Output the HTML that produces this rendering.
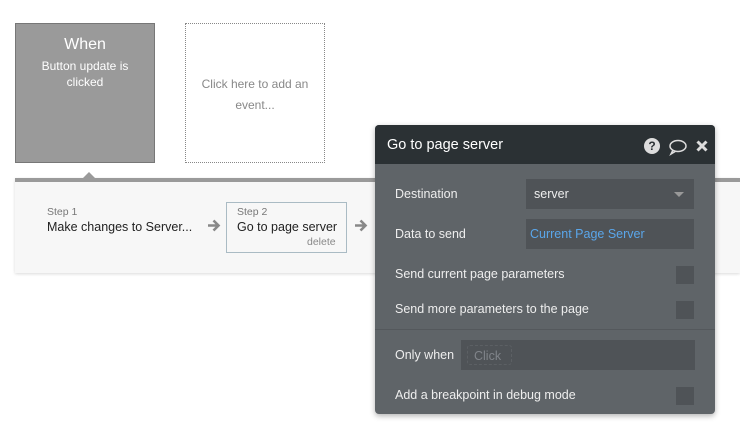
<!DOCTYPE html>
<html><head><style>
*{margin:0;padding:0;box-sizing:border-box}
body{width:740px;height:436px;background:#fff;position:relative;overflow:hidden;font-family:"Liberation Sans","DejaVu Sans",sans-serif}
.a{position:absolute}
</style></head><body>
<div class="a" style="left:15px;top:23px;width:140px;height:140px;background:#9a9a9a;border:1px solid #777;color:#fff;text-align:center">
<div style="font-size:16px;margin-top:12px">When</div>
<div style="font-size:12px;line-height:16px;margin-top:4px">Button update is<br>clicked</div>
</div>
<div class="a" style="left:185px;top:23px;width:140px;height:140px;border:1px dotted #888;color:#888;text-align:center;font-size:12px;line-height:21px;padding-top:50px">Click here to add an<br>event...</div>
<div class="a" style="left:15px;top:178px;width:725px;height:95px;background:#f7f7f7;border-top:4px solid #9a9a9a;box-shadow:0 1px 3px rgba(0,0,0,.15)"></div>
<div class="a" style="left:82px;top:172px;width:0;height:0;border-left:7px solid transparent;border-right:7px solid transparent;border-bottom:7px solid #9a9a9a"></div>
<div class="a" style="left:47px;top:206px;font-size:10.5px;color:#777">Step 1</div>
<div class="a" style="left:47px;top:220px;font-size:12.5px;color:#222">Make changes to Server...</div>
<svg class="a" style="left:207px;top:219px" width="14" height="13" viewBox="0 0 14 13"><path d="M1 6.5H11M6.5 1.5L11.5 6.5L6.5 11.5" fill="none" stroke="#888" stroke-width="2.6"/></svg>
<div class="a" style="left:226px;top:202px;width:121px;height:51px;border:1px solid #aabbc4;background:#f7f7f7"></div>
<div class="a" style="left:237px;top:206px;font-size:10.5px;color:#777">Step 2</div>
<div class="a" style="left:237px;top:220px;font-size:12.5px;color:#222">Go to page server</div>
<div class="a" style="left:307px;top:236px;font-size:10.5px;color:#888">delete</div>
<svg class="a" style="left:354px;top:219px" width="14" height="13" viewBox="0 0 14 13"><path d="M1 6.5H11M6.5 1.5L11.5 6.5L6.5 11.5" fill="none" stroke="#888" stroke-width="2.6"/></svg>

<div class="a" style="left:375px;top:125px;width:340px;height:289px;background:#5f6468;border-radius:4px;box-shadow:0 2px 6px rgba(0,0,0,.3);overflow:hidden;color:#eee;font-size:12.5px">
<div style="height:39px;background:#2b3134;color:#fff;font-size:14.5px;padding:12px 0 0 12px">Go to page server</div>
<div class="a" style="left:269px;top:13px;width:16px;height:16px;border-radius:50%;background:#ddd;color:#2b3134;font-size:12px;font-weight:bold;text-align:center;line-height:16px">?</div>
<svg class="a" style="left:293px;top:13px" width="20" height="18" viewBox="0 0 20 18"><ellipse cx="10" cy="8" rx="8" ry="5.5" fill="none" stroke="#ddd" stroke-width="1.5"/><path d="M5 12 L3 16 L8 13" fill="none" stroke="#ddd" stroke-width="1.5"/></svg>
<svg class="a" style="left:321px;top:15px" width="12" height="12"><path d="M1.5 1.5L10.5 10.5M10.5 1.5L1.5 10.5" stroke="#ddd" stroke-width="3"/></svg>
<div class="a" style="left:20px;top:62px">Destination</div>
<div class="a" style="left:151px;top:54px;width:168px;height:30px;background:#4f5357;padding:8px 0 0 8px">server</div>
<div class="a" style="left:299px;top:67px;width:0;height:0;border-left:5px solid transparent;border-right:5px solid transparent;border-top:5px solid #999"></div>
<div class="a" style="left:20px;top:102px">Data to send</div>
<div class="a" style="left:151px;top:94px;width:168px;height:30px;background:#4f5357;padding:8px 0 0 4px;color:#5aa6ea">Current Page Server</div>
<div class="a" style="left:20px;top:142px">Send current page parameters</div>
<div class="a" style="left:301px;top:141px;width:18px;height:18px;background:#4f5357"></div>
<div class="a" style="left:20px;top:177px">Send more parameters to the page</div>
<div class="a" style="left:301px;top:176px;width:18px;height:18px;background:#4f5357"></div>
<div class="a" style="left:0;top:204px;width:340px;height:1px;background:#54585c"></div>
<div class="a" style="left:20px;top:223px">Only when</div>
<div class="a" style="left:86px;top:215px;width:234px;height:30px;background:#4f5357"></div>
<div class="a" style="left:92px;top:220px;width:45px;height:20px;border:1px dashed #5c6064;border-radius:3px;color:#80848a;padding:3px 0 0 6px">Click</div>
<div class="a" style="left:20px;top:263px">Add a breakpoint in debug mode</div>
<div class="a" style="left:301px;top:262px;width:18px;height:18px;background:#4f5357"></div>
</div>
</body></html>
